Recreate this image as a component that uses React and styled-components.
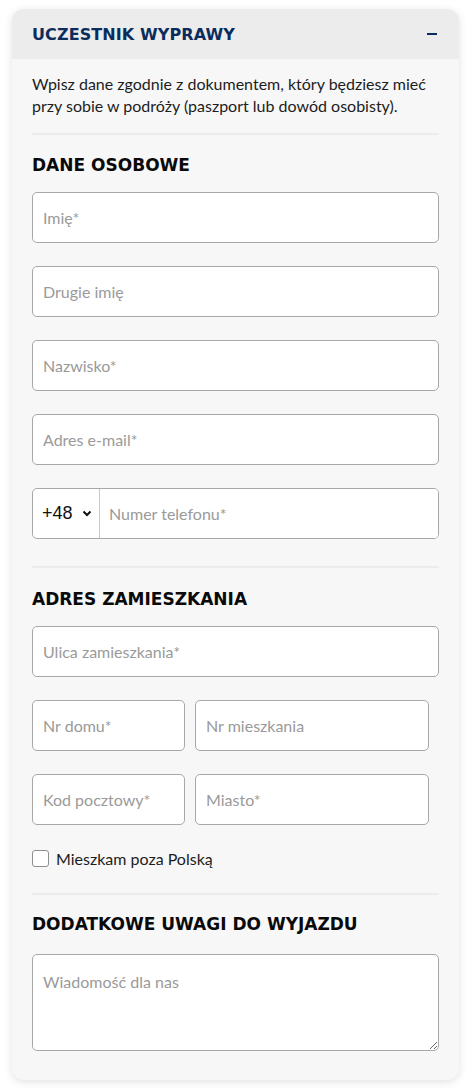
import React from 'react'
import styled, { createGlobalStyle } from 'styled-components'

const GlobalStyle = createGlobalStyle`
    body {
        margin: 0;
        background: #ffffff;
        font-family: Lato, "Open Sans", sans-serif;
    }
    * {
        box-sizing: border-box;
    }
`

const Card = styled.div`
    margin: 9px 14px 11px 12px;
    background: #f7f7f7;
    border-radius: 12px;
    overflow: hidden;
    box-shadow: 0 2px 8px rgba(0, 0, 0, 0.12);
`

const Header = styled.div`
    height: 50px;
    background: #ececec;
    display: flex;
    align-items: center;
    justify-content: space-between;
    padding: 0 22px 0 20px;
`

const Title = styled.h2`
    margin: 0;
    font-family: "DejaVu Sans", sans-serif;
    font-weight: 700;
    font-size: 16px;
    color: #0b2c5c;
    letter-spacing: 0.1px;
`

const Minus = styled.span`
    width: 10px;
    height: 2px;
    background: #0b2c5c;
`

const Body = styled.div`
    padding: 14px 20px 29px;
`

const Intro = styled.p`
    margin: 0;
    font-size: 16px;
    line-height: 22px;
    color: #1d1d1d;
`

const Divider = styled.hr`
    border: none;
    border-top: 2px solid #ececec;
    margin: ${(p) => p.$top || 15}px 0 0;
`

const SectionTitle = styled.h3`
    margin: ${(p) => p.$top || 20}px 0 ${(p) => p.$bottom || 16}px;
    font-family: "DejaVu Sans", sans-serif;
    font-weight: 700;
    font-size: 17px;
    line-height: 22px;
    color: #0a0a0a;
`

const Fields = styled.div`
    display: flex;
    flex-direction: column;
    gap: 23px;
`

const Row = styled.div`
    display: grid;
    grid-template-columns: 153px 234px;
    gap: 10px;
`

const Input = styled.input`
    width: 100%;
    height: 51px;
    border: 1px solid #a8a8a8;
    border-radius: 5px;
    background: #ffffff;
    padding: 0 10px;
    font-family: Lato, sans-serif;
    font-size: 16px;
    color: #222;
    outline: none;

    &::placeholder {
        color: #9a9a9a;
    }
`

const PhoneBox = styled.div`
    display: flex;
    height: 51px;
    border: 1px solid #a8a8a8;
    border-radius: 5px;
    background: #ffffff;
    overflow: hidden;
`

const Prefix = styled.div`
    flex-shrink: 0;
    width: 67px;
    display: flex;
    align-items: center;
    gap: 9px;
    padding-left: 9px;
    border-right: 1px solid #c8c8c8;
    font-family: "Liberation Sans", Arial, sans-serif;
    font-size: 18px;
    color: #111;
`

const PhoneInput = styled(Input)`
    flex: 1;
    border: none;
    border-radius: 0;
    height: 100%;
    padding-left: 9px;
`

const CheckRow = styled.label`
    display: flex;
    align-items: center;
    gap: 7px;
    margin-top: 24px;
    font-size: 16px;
    color: #1d1d1d;
`

const Box = styled.span`
    width: 17px;
    height: 17px;
    border: 1px solid #8f8f8f;
    border-radius: 3px;
    background: #ffffff;
`

const TextArea = styled.textarea`
    display: block;
    width: 100%;
    height: 97px;
    border: 1px solid #a8a8a8;
    border-radius: 5px;
    background: #ffffff;
    padding: 17px 10px;
    font-family: Lato, sans-serif;
    font-size: 16px;
    resize: vertical;
    outline: none;

    &::placeholder {
        color: #9a9a9a;
    }
`

function App() {
    return (
        <>
            <GlobalStyle />
            <Card>
                <Header>
                    <Title>UCZESTNIK WYPRAWY</Title>
                    <Minus />
                </Header>
                <Body>
                    <Intro>
                        Wpisz dane zgodnie z dokumentem, który będziesz mieć przy sobie w podróży (paszport lub dowód osobisty).
                    </Intro>
                    <Divider $top={16} />

                    <SectionTitle $top={19}>DANE OSOBOWE</SectionTitle>
                    <Fields>
                        <Input placeholder="Imię*" />
                        <Input placeholder="Drugie imię" />
                        <Input placeholder="Nazwisko*" />
                        <Input placeholder="Adres e-mail*" />
                        <PhoneBox>
                            <Prefix>
                                +48
                                <svg width="10" height="7" viewBox="0 0 10 7">
                                    <path d="M1.5 1.5 L5 5 L8.5 1.5" fill="none" stroke="#111" strokeWidth="2" />
                                </svg>
                            </Prefix>
                            <PhoneInput placeholder="Numer telefonu*" />
                        </PhoneBox>
                    </Fields>
                    <Divider $top={27} />

                    <SectionTitle $top={20}>ADRES ZAMIESZKANIA</SectionTitle>
                    <Fields>
                        <Input placeholder="Ulica zamieszkania*" />
                        <Row>
                            <Input placeholder="Nr domu*" />
                            <Input placeholder="Nr mieszkania" />
                        </Row>
                        <Row>
                            <Input placeholder="Kod pocztowy*" />
                            <Input placeholder="Miasto*" />
                        </Row>
                    </Fields>
                    <CheckRow>
                        <Box />
                        Mieszkam poza Polską
                    </CheckRow>
                    <Divider $top={25} />

                    <SectionTitle $top={18} $bottom={19}>DODATKOWE UWAGI DO WYJAZDU</SectionTitle>
                    <TextArea placeholder="Wiadomość dla nas" />
                </Body>
            </Card>
        </>
    )
}

export default App
